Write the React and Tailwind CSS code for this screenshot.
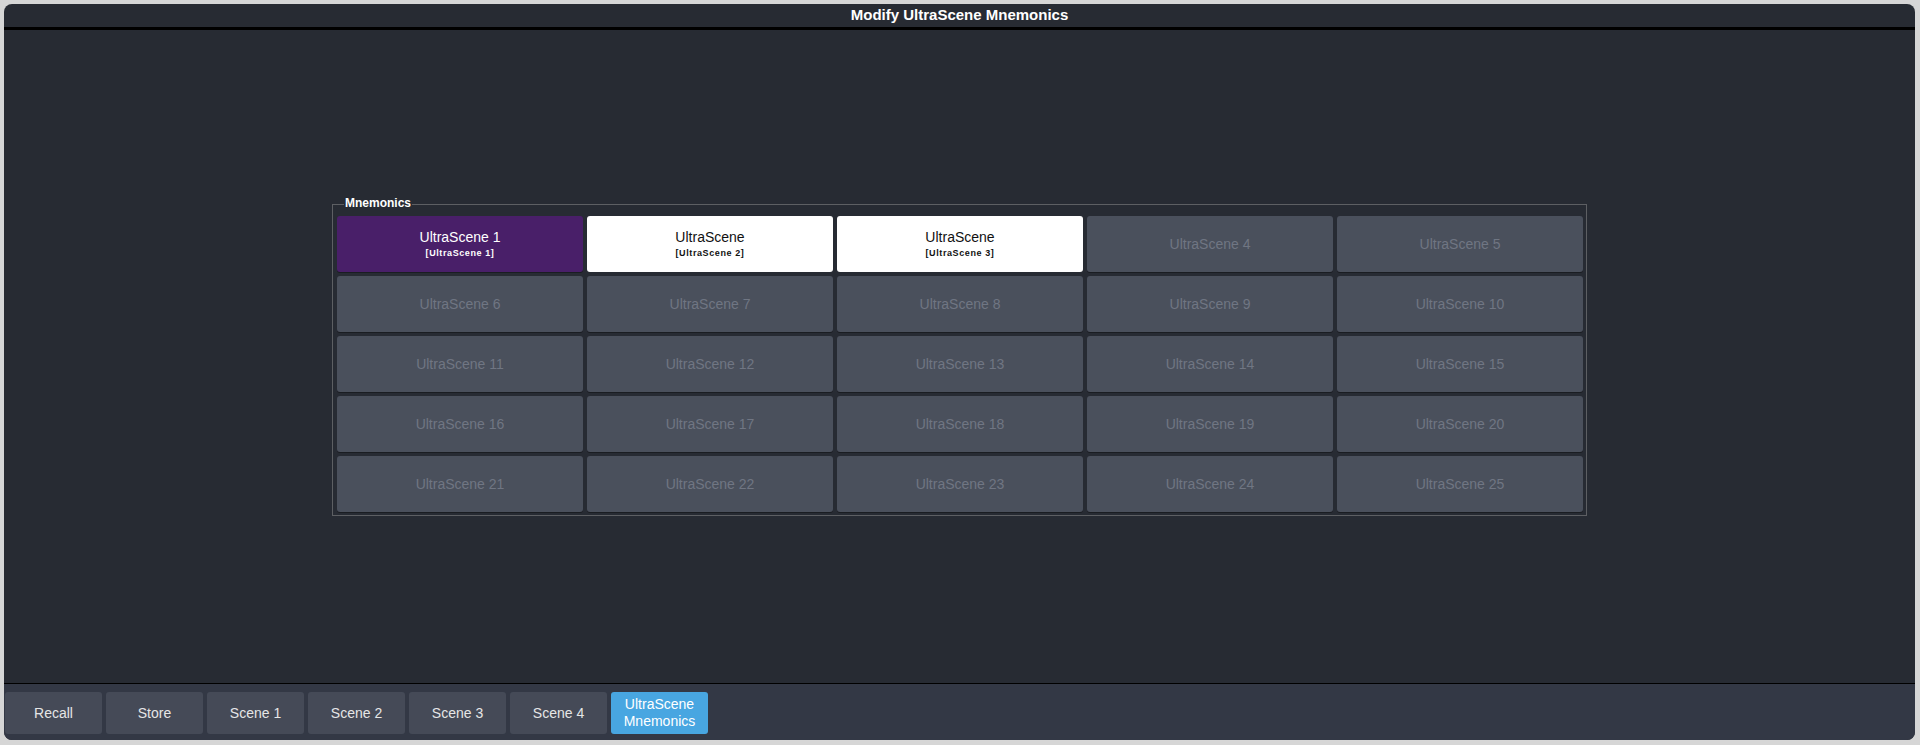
const cells = Array.from({ length: 25 }, (_, i) => i + 1);

function Cell({ n }) {
  if (n === 1) {
    return (
      <div className="h-[56px] rounded-[3px] bg-[#491f69] flex flex-col items-center justify-center text-white shadow-[0_1px_0_#1a1d22]">
        <span className="text-[14px] leading-[16px]">UltraScene 1</span>
        <span className="text-[9px] leading-[12px] mt-[2px] tracking-[0.6px] font-bold">[UltraScene 1]</span>
      </div>
    );
  }
  if (n === 2 || n === 3) {
    return (
      <div className="h-[56px] rounded-[3px] bg-white flex flex-col items-center justify-center text-[#111]">
        <span className="text-[14px] leading-[16px]">UltraScene</span>
        <span className="text-[9px] leading-[12px] mt-[2px] tracking-[0.6px] font-bold">[UltraScene {n}]</span>
      </div>
    );
  }
  return (
    <div className="h-[56px] rounded-[3px] bg-[#4a505c] flex items-center justify-center text-[#707683] shadow-[0_1px_0_#1a1d22]">
      <span className="text-[14px] leading-[16px]">UltraScene {n}</span>
    </div>
  );
}

const buttons = ['Recall', 'Store', 'Scene 1', 'Scene 2', 'Scene 3', 'Scene 4'];

export default function App() {
  return (
    <div className="w-[1920px] h-[745px] bg-[#d6d6d6] pt-[4px] pl-[4px] pr-[5px] pb-[5px] font-['Liberation_Sans',Arial,sans-serif]">
      <div className="h-full rounded-[8px] overflow-hidden bg-[#272b33] flex flex-col">
        <div className="h-[26px] shrink-0 flex items-center justify-center text-white font-bold text-[15px] border-b-[3px] border-black">
          Modify UltraScene Mnemonics
        </div>
        <div className="flex-1 flex items-center justify-center">
          <div className="relative mt-[6px] border border-[#5d5f63] pt-[11px] pl-[4px] pr-[3px] pb-[3px]">
            <span className="absolute left-[11px] top-[-9px] bg-[#272b33] px-[1px] text-white font-bold text-[12px] leading-[14px]">Mnemonics</span>
            <div className="grid grid-cols-[repeat(5,246px)] gap-[4px]">
              {cells.map((n) => (
                <Cell key={n} n={n} />
              ))}
            </div>
          </div>
        </div>
        <div className="h-[57px] shrink-0 bg-[#333845] border-t border-black flex items-start gap-[4px] pl-[1px] pt-[8px]">
          {buttons.map((b) => (
            <div key={b} className="w-[97px] h-[42px] rounded-[3px] bg-[#454a57] flex items-center justify-center text-[#e6e6e6] text-[14px]">
              {b}
            </div>
          ))}
          <div className="w-[97px] h-[42px] rounded-[3px] bg-[#48a6e1] flex flex-col items-center justify-center text-white text-[14px] leading-[17px]">
            <span>UltraScene</span>
            <span>Mnemonics</span>
          </div>
        </div>
      </div>
    </div>
  );
}
